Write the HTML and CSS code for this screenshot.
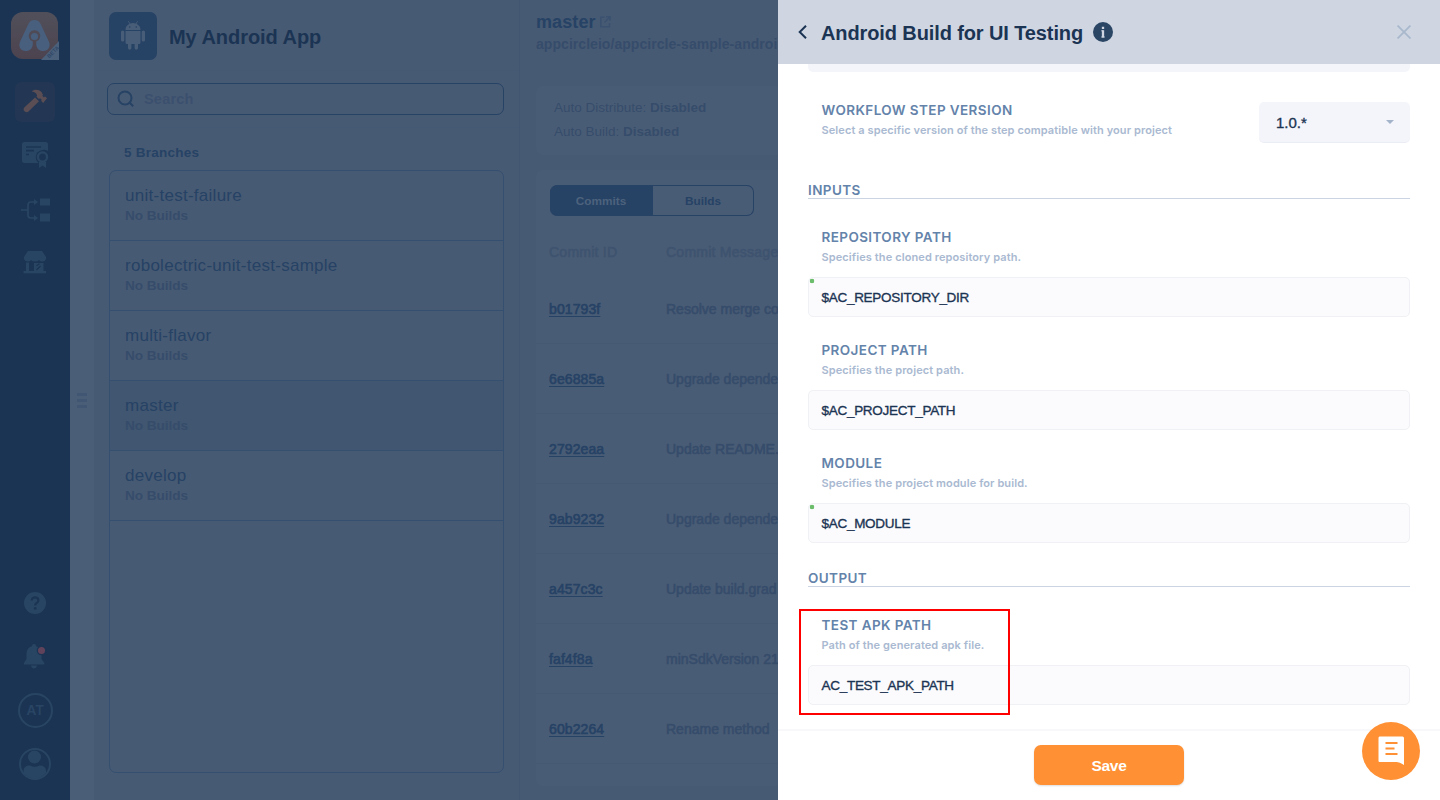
FILE: index.html
```html
<!DOCTYPE html>
<html lang="en">
<head>
<meta charset="utf-8">
<title>My Android App</title>
<link rel="stylesheet" href="styles.css">
</head>
<body>
<div class="app">
  <nav class="sidebar">
    <svg class="logo" width="49" height="49" viewBox="0 0 49 49">
      <defs><linearGradient id="lg" x1="0" y1="0" x2="0" y2="1"><stop offset="0" stop-color="#51505a"/><stop offset="1" stop-color="#4c434f"/></linearGradient></defs>
      <rect width="47" height="47" rx="12" fill="url(#lg)"/>
      <path d="M23.500 8c3 0 5 1.500 6 3.700l8.500 18c2 5-1 9.300-5.500 9.300-5 0-7.300-3.300-7.300-7.300v-2.200a5.800 5.800 0 1 0-3.400 0v2.200c0 4-2.300 7.300-7.300 7.300-4.500 0-7.500-4.300-5.500-9.300l8.500-18C18.500 9.500 20.500 8 23.500 8z" fill="#485f7d"/>
      <circle cx="23.500" cy="24.500" r="3.600" fill="#485f7d"/>
      <path d="M48 29v19H30z" fill="#4b607b"/>
      <text x="0" y="0" class="beta" transform="translate(38.200 46.500) rotate(-45)">BETA</text>
    </svg>
    <div class="active-item">
      <svg width="24" height="24" viewBox="0 0 24 24" fill="#5a4e54"><path d="M8.500 2.500C11 .3 15.500-.2 18.500 3l1.300 2.500-.3 1.500 1.300 1.300 1.300-.8L24 9.300 20.200 14l-2-1.900.4-1.500-1.300-1.200-1.800.3-2-1.900.6-1.600C13 3.700 11 2.500 8.500 2.500z"/><path d="M12 8.500l4 3.700L5.500 22.500c-2.500 2-6-1-4.500-3.700z"/></svg>
    </div>
    <svg class="nav-doc" width="28" height="28" viewBox="0 0 28 28"><path d="M2.500 0h21A2.500 2.500 0 0 1 26 2.500V9a7.500 7.500 0 0 0-11 8.500l1.500 3.500h-14A2.500 2.500 0 0 1 0 18.500v-16A2.500 2.500 0 0 1 2.500 0z" fill="#294564"/><path d="M4 5h15M4 8.700h8M4 12.500h3" stroke="#1b3453" stroke-width="1.700"/><circle cx="20.500" cy="15" r="6.800" fill="#1b3453"/><path d="M17 20v6l3.500-2.500L24 26v-6z" fill="#294564"/><circle cx="20.500" cy="15" r="4.600" fill="#1b3453" stroke="#294564" stroke-width="2.400"/></svg>
    <svg class="nav-flow" width="30" height="24" viewBox="0 0 30 24"><path d="M0 12h7M15 4h-5q-3 0-3 3v10q0 3 3 3h5" fill="none" stroke="#294564" stroke-width="1.700"/><path d="M13 1l4 3-4 3zM13 17l4 3-4 3zM19 .5h10v7H19zM19 15.500h10v8H19z" fill="#294564"/></svg>
    <svg class="nav-store" width="24" height="23" viewBox="0 0 24 23" fill="#294564"><path d="M5 0h14l4 6v2q-1 2.500-3.500 2.500Q17 10.500 16 9q-1.500 1.500-4 1.500T8 9q-1 1.500-3.500 1.500T1 8V6z"/><path d="M3 11.500h3V20h5v-8h9.500v8h2.500v2.200H.5V20H3z"/><path d="M13.500 14.800l3-2M13.500 19l4-4" stroke="#1b3453" stroke-width="1.300"/></svg>
    <svg class="nav-help" width="22" height="22" viewBox="0 0 22 22"><circle cx="11" cy="11" r="11" fill="#294564"/><path d="M7.700 8.600C7.700 6.500 9 5.400 11 5.400s3.400 1.200 3.400 3c0 2.600-3.200 2.500-3.200 5" fill="none" stroke="#1b3453" stroke-width="2.200"/><circle cx="11.200" cy="16.400" r="1.400" fill="#1b3453"/></svg>
    <svg class="nav-bell" width="22" height="25" viewBox="0 0 22 25"><path d="M10 0q2 0 2 2.300Q17.500 4 17.500 10v5l2.800 4v1.500H0V19l2.500-4v-5Q2.500 4 8 2.300 8 0 10 0zM7 21.500h6q-.7 3-3 3t-3-3z" fill="#294564"/><circle cx="17.500" cy="6.500" r="4.800" fill="#1b3453"/><circle cx="17.500" cy="6.500" r="3.500" fill="#60435b"/></svg>
    <div class="initials">AT</div>
    <svg class="nav-user" width="32" height="32" viewBox="0 0 32 32"><circle cx="16" cy="16" r="15" fill="none" stroke="#294564" stroke-width="2"/><circle cx="15.500" cy="9" r="6.500" fill="#294564"/><path d="M4.500 25v-2q0-5.500 6.500-5.500 4.500 2.500 9.500 0 6.500 0 6.500 5.500v2Q22 30.500 16 30.500T4.500 25z" fill="#294564"/></svg>
  </nav>
  <div class="gutter"><i></i><i></i><i></i></div>
  <section class="branches">
    <header class="app-head">
      <div class="app-icon"><svg width="26" height="30" viewBox="0 0 26 30" fill="#485d78"><path d="M5.500 9a7.500 7 0 0 1 4-6.200L8 .5l.6-.4 1.600 2.300q2.800-1 5.600 0L17.400.1l.6.4-1.500 2.300a7.500 7 0 0 1 4 6.200z"/><path d="M5.500 10h15v11.500q0 1.500-1.500 1.500h-1v4q0 1.700-1.700 1.700T14.600 27v-4h-3.200v4q0 1.700-1.700 1.700T8 27v-4H7q-1.500 0-1.500-1.500z"/><rect x="1" y="9.500" width="3.300" height="11" rx="1.600"/><rect x="21.700" y="9.500" width="3.300" height="11" rx="1.600"/><circle cx="9.700" cy="6" r=".8" fill="#264265"/><circle cx="16.300" cy="6" r=".8" fill="#264265"/></svg></div>
      <h1>My Android App</h1>
    </header>
    <div class="search-row"><div class="search"><svg width="18" height="18" viewBox="0 0 18 18" fill="none" stroke="#264265" stroke-width="2"><circle cx="8" cy="8" r="6.500"/><path d="M12.500 12.500l3.700 3.700"/></svg><span>Search</span></div></div>
    <h2>5 Branches</h2>
    <ul class="branch-list">
      <li><b>unit-test-failure</b><span>No Builds</span></li>
      <li><b>robolectric-unit-test-sample</b><span>No Builds</span></li>
      <li><b>multi-flavor</b><span>No Builds</span></li>
      <li class="selected"><b>master</b><span>No Builds</span></li>
      <li><b>develop</b><span>No Builds</span></li>
    </ul>
  </section>
  <main class="main">
    <header class="main-head">
      <div class="branch-name"><span>master</span><svg width="11" height="12" viewBox="0 0 11 12" fill="none" stroke="#3a5170" stroke-width="1.500"><path d="M4.500 1.200H.8v9.500h8.700V7M6 .8h4v4M10 .8L4.500 6.500"/></svg></div>
      <div class="repo">appcircleio/appcircle-sample-androi</div>
    </header>
    <div class="card auto"><p>Auto Distribute: <b>Disabled</b></p><p>Auto Build: <b>Disabled</b></p></div>
    <div class="card commits">
      <div class="tabs"><span class="on">Commits</span><span>Builds</span></div>
      <div class="row th"><span>Commit ID</span><span>Commit Message</span></div>
      <div class="row"><a>b01793f</a><span>Resolve merge co</span></div>
      <div class="row"><a>6e6885a</a><span>Upgrade depende</span></div>
      <div class="row"><a>2792eaa</a><span>Update README.</span></div>
      <div class="row"><a>9ab9232</a><span>Upgrade depende</span></div>
      <div class="row"><a>a457c3c</a><span>Update build.grad</span></div>
      <div class="row"><a>faf4f8a</a><span>minSdkVersion 21</span></div>
      <div class="row"><a>60b2264</a><span>Rename method</span></div>
    </div>
  </main>
  <aside class="panel">
    <header class="panel-head">
      <svg width="9" height="14" viewBox="0 0 9 14" fill="none" stroke="#1b3453" stroke-width="2"><path d="M8 .7L1.700 7 8 13.300"/></svg>
      <h1>Android Build for UI Testing</h1>
      <svg class="info" width="20" height="20" viewBox="0 0 20 20"><circle cx="10" cy="10" r="10" fill="#2b4665"/><path d="M10 8.300V15.500M10 4.700V7" stroke="#cfd6e2" stroke-width="2.300"/><path d="M8.300 8.800h2M8.300 15h3.400" stroke="#cfd6e2" stroke-width="1"/></svg>
      <svg class="close" width="14" height="14" viewBox="0 0 14 14" stroke="#a9b8cd" stroke-width="1.800"><path d="M.5.500l13 13M13.500.500l-13 13"/></svg>
    </header>
    <div class="panel-body">
      <div class="prev-box"></div>
      <div class="version">
        <div class="label"><h3>WORKFLOW STEP VERSION</h3><p>Select a specific version of the step compatible with your project</p></div>
        <div class="select"><span>1.0.*</span><i></i></div>
      </div>
      <h3 class="section">INPUTS</h3>
      <div class="field"><h3>REPOSITORY PATH</h3><p>Specifies the cloned repository path.</p><div class="input req">$AC_REPOSITORY_DIR</div></div>
      <div class="field"><h3>PROJECT PATH</h3><p>Specifies the project path.</p><div class="input">$AC_PROJECT_PATH</div></div>
      <div class="field"><h3>MODULE</h3><p>Specifies the project module for build.</p><div class="input req">$AC_MODULE</div></div>
      <h3 class="section out">OUTPUT</h3>
      <div class="field highlighted"><h3>TEST APK PATH</h3><p>Path of the generated apk file.</p><div class="input">AC_TEST_APK_PATH</div></div>
    </div>
    <footer class="panel-foot"><button class="save">Save</button></footer>
    <div class="chat"><svg width="27" height="30" viewBox="0 0 27 30"><path d="M1.500.500h23q1.500 0 1.500 1.500v27q-4.500-3-7.500-3h-17Q.5 26 .5 25V2Q.5.500 1.500.500z" fill="#fff"/><path d="M7.500 7h12M7.500 12.500h9M7.500 18h12" stroke="#ff9033" stroke-width="2.200"/></svg></div>
  </aside>
</div>
</body>
</html>
```
FILE: styles.css
```css
* { box-sizing: border-box; }
body, h1, h2, h3, p, ul { margin: 0; padding: 0; }
body { font-family: "Liberation Sans", Arial, sans-serif; }
svg { display: block; flex: none; }
.app { display: flex; width: 1440px; height: 800px; overflow: hidden; background: #475a73; }

.sidebar { width: 70px; flex: none; height: 800px; background: #1b3453; display: flex; flex-direction: column; align-items: flex-start; }
.logo { margin: 12px 0 0 11px; overflow: visible; }
.beta { font: 700 5.5px "Liberation Sans", sans-serif; fill: #2f4868; }
.active-item { width: 40px; height: 40px; margin: 21px 0 0 15px; border-radius: 6px; background: #233653; display: flex; align-items: center; justify-content: center; }
.active-item svg { margin-top: -3px; }
.nav-doc { margin: 20px 0 0 22px; }
.nav-flow { margin: 28px 0 0 21px; }
.nav-store { margin: 29px 0 0 23px; }
.nav-help { margin: 318px 0 0 24px; }
.nav-bell { margin: 30px 0 0 24px; }
.initials { width: 35px; height: 35px; margin: 24px 0 0 18px; border: 2px solid #294564; border-radius: 50%; color: #294564; font: 600 13.5px/31px Inter, sans-serif; text-align: center; letter-spacing: .2px; }
.nav-user { margin: 20px 0 0 19px; }

.gutter { width: 24px; flex: none; background: #4b5e78; padding: 393px 7px 0; }
.gutter i { display: block; height: 3px; margin-bottom: 3px; background: #415673; }

.branches { width: 426px; flex: none; height: 800px; padding-left: 2px; border-right: 1px solid #435671; }
.app-head { height: 71px; display: flex; padding: 12px 0 0 13px; border-bottom: 1px solid #445973; }
.app-icon { width: 48px; height: 48px; border-radius: 7px; background: #264265; display: flex; align-items: center; justify-content: center; }
.app-head h1 { margin-left: 12px; font-size: 20px; line-height: 51px; letter-spacing: -.05px; color: #1b3453; }
.search-row { height: 57px; padding: 12px 0 0 11px; border-bottom: 1px solid #445973; }
.search { width: 397px; height: 32px; border: 1px solid #264265; border-radius: 7px; display: flex; align-items: center; padding-left: 9px; gap: 9px; font-size: 14.5px; font-weight: 700; letter-spacing: .2px; line-height: 28px; color: #3b506e; }
.search span { margin-top: -1px; }
.branches h2 { margin: 17px 0 0 28px; font-size: 13.5px; line-height: 16px; letter-spacing: .25px; color: #264265; height: 25px; }
.branch-list { list-style: none; width: 395px; height: 603px; margin-left: 13px; border: 1px solid #344f70; border-radius: 7px; }
.branch-list li { height: 70px; padding: 15px 15px 0; border-bottom: 1px solid #344f70; }
.branch-list b { display: block; font-weight: 400; font-size: 17px; letter-spacing: .27px; line-height: 20px; color: #264265; }
.branch-list span { display: block; font-weight: 700; font-size: 13.6px; letter-spacing: -.05px; line-height: 20px; color: #364c6b; }
.branch-list .selected { background: #415670; }

.main { width: 258px; flex: none; height: 800px; overflow: hidden; white-space: nowrap; padding-left: 16px; }
.main-head { height: 71px; margin-left: -16px; padding: 11px 0 0 16px; }
.branch-name { display: flex; align-items: center; gap: 4px; font-weight: 700; font-size: 18px; letter-spacing: .1px; line-height: 22px; color: #264265; }
.repo { font-weight: 700; font-size: 14px; line-height: 22px; letter-spacing: .05px; color: #364c6b; }
.card { width: 890px; background: #495c75; border-radius: 7px; }
.auto { height: 69px; margin-top: 15px; padding: 10px 18px; }
.auto p { font: 400 13.5px/24px "Liberation Sans", sans-serif; letter-spacing: 0; color: #364c6b; }
.commits { height: 616px; margin-top: 15px; }
.tabs { display: flex; width: 204px; height: 46px; padding-top: 15px; margin-left: 14px; }
.tabs span { width: 101px; height: 31px; border: 1px solid #264265; border-left: 0; border-radius: 0 7px 7px 0; text-align: center; font: 700 11.8px/30px "Liberation Sans", sans-serif; color: #264265; }
.tabs .on { width: 103px; background: #264265; border-radius: 7px 0 0 7px; color: #4d627d; }
.row { height: 70px; display: flex; align-items: center; padding-left: 13px; border-bottom: 1px solid #455973; font-size: 14px; color: #364c6b; -webkit-text-stroke: .6px; }
.row > :first-child { width: 117px; text-underline-offset: 2px; }
.row a { color: #264265; text-decoration: underline; letter-spacing: .1px; }
.row.th { height: 58px; padding-top: 13px; border: 0; color: #3e536f; letter-spacing: .25px; }

.panel { position: relative; width: 662px; flex: none; height: 800px; background: #fff; display: flex; flex-direction: column; }
.panel-head { height: 64px; flex: none; background: #cfd6e2; display: flex; align-items: center; padding: 0 29px 0 20px; }
.panel-head h1 { margin: 1px 0 0 14px; font-size: 20px; letter-spacing: -.11px; line-height: 30px; color: #1b3453; }
.info { margin-left: 10px; }
.close { margin-left: auto; }
.panel-body { flex: 1; padding: 0 30px; }
.prev-box { height: 8px; background: #f4f5fa; border-radius: 0 0 5px 5px; }
.version { display: flex; justify-content: space-between; margin-top: 30px; height: 41px; }
.label { margin-top: -1px; padding-left: 13.5px; }
.label p { padding-top: 1px; }
h3 { font: 600 13.5px/18px Inter, sans-serif; letter-spacing: .4px; color: #6483aa; }
p { font: 600 11px/20px Inter, sans-serif; letter-spacing: .1px; color: #a9b9d1; }
.select { width: 151px; height: 41px; background: #f4f5fa; border-bottom: 1px solid #ebedf4; border-radius: 5px; display: flex; align-items: center; justify-content: space-between; padding: 0 16px 0 17px; font-size: 15px; color: #1b3453; -webkit-text-stroke: .35px; }
.select span { margin-top: 1px; }
.select i { border: 4px solid transparent; border-top-color: #a3b3ca; border-bottom: 0; }
.section { margin-top: 38px; height: 18px; border-bottom: 1px solid #cbd4e2; }
.field { margin-top: 29px; height: 89px; }
.field + .field { margin-top: 24px; }
.field h3, .field p { padding-left: 13.5px; }
.field p { padding-top: 1px; margin-bottom: 10px; }
.input { height: 40px; border: 1px solid #f0f1f5; border-radius: 5px; background: #fbfbfd; padding-left: 12.5px; font: 13.5px/39px "Liberation Sans", sans-serif; letter-spacing: -.28px; color: #1b3453; -webkit-text-stroke: .35px; }
.req { background: radial-gradient(circle at 3px 3px, #6bbd6b 2px, transparent 2.6px) #fbfbfd; }
.section.out { margin-top: 26px; }
.highlighted { position: relative; }
.highlighted::after { content: ""; box-sizing: border-box; position: absolute; left: -9px; top: -7px; width: 211px; height: 106px; border: 2px solid #f00; }
.panel-foot { height: 71px; border-top: 2px solid #f8f8fa; display: flex; justify-content: center; padding-top: 14px; }
.save { width: 150px; height: 40px; border: 0; border-radius: 7px; background: #ff9033; color: #fff; font: 700 15.5px "Liberation Sans", sans-serif; letter-spacing: -.3px; padding-top: 3px; box-shadow: 0 1px 2px #0002; }
.chat { position: absolute; left: 584px; top: 722px; width: 58px; height: 58px; border-radius: 50%; background: #ff9033; display: flex; align-items: center; justify-content: center; }
```
